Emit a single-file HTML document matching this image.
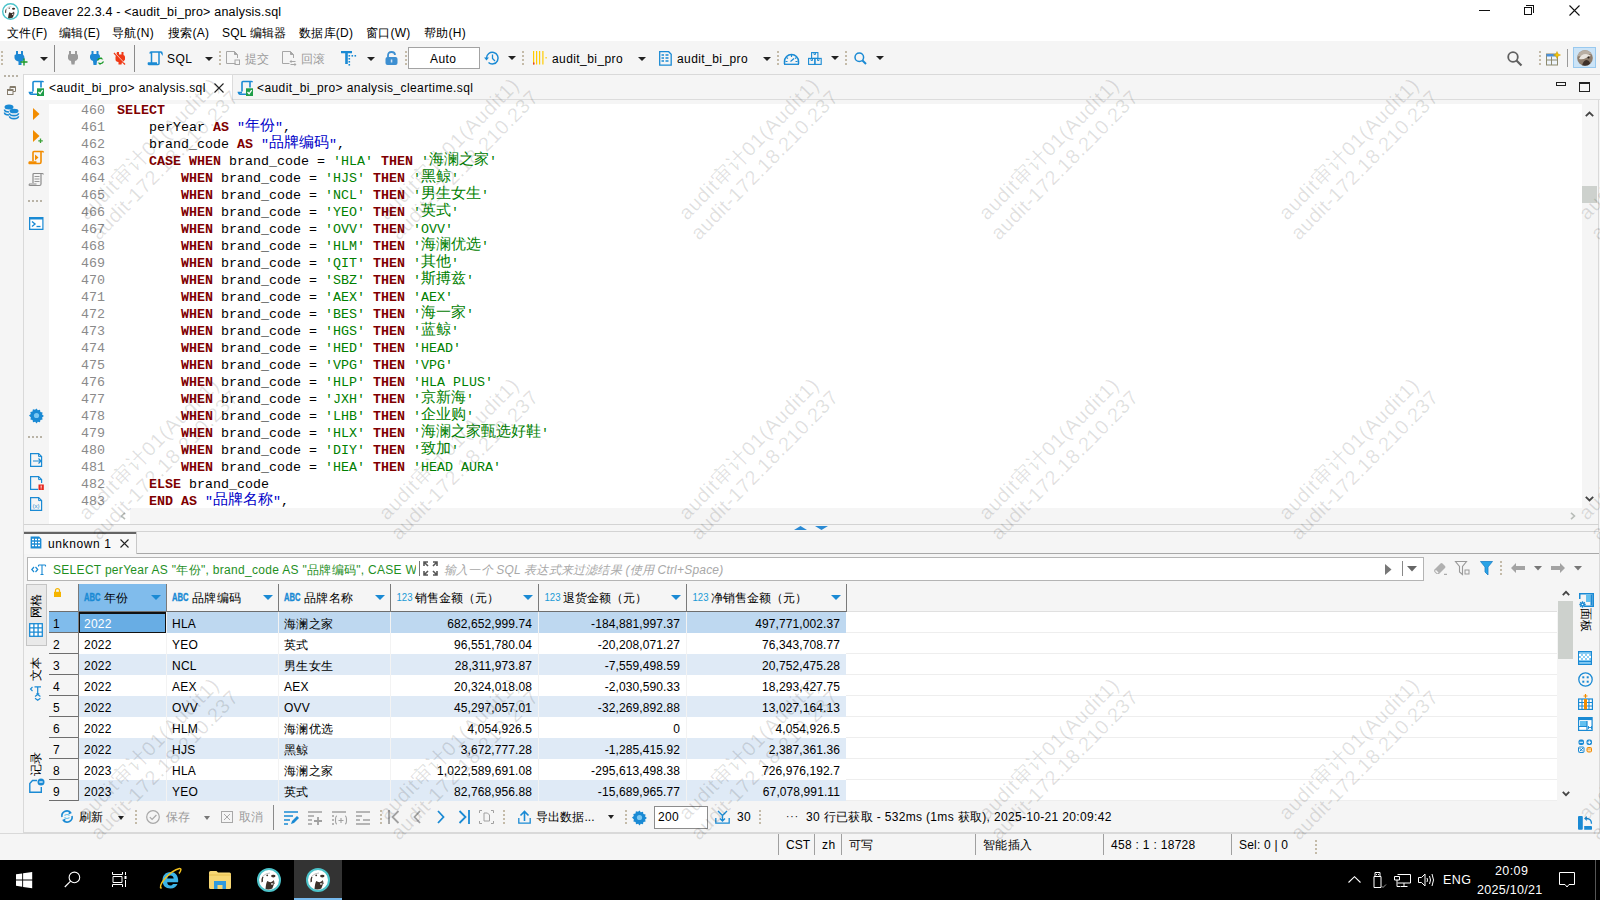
<!DOCTYPE html>
<html><head><meta charset="utf-8">
<style>
*{box-sizing:border-box;margin:0;padding:0}
html,body{width:1600px;height:900px;overflow:hidden;background:#f5f5f5;font-family:"Liberation Sans",sans-serif;font-size:12px;color:#000}
.a{position:absolute}
.t{position:absolute;white-space:nowrap;line-height:14px;letter-spacing:0.25px}
svg{position:absolute;overflow:visible}
.grip{position:absolute;width:2px;height:15px;background:repeating-linear-gradient(to bottom,#c4bba9 0,#c4bba9 2px,transparent 2px,transparent 4px)}
.hgrip{position:absolute;height:2px;width:15px;background:repeating-linear-gradient(to right,#b9b3a6 0,#b9b3a6 2px,transparent 2px,transparent 4px)}
.dd{position:absolute;width:0;height:0;border-left:4px solid transparent;border-right:4px solid transparent;border-top:4px solid #222}
.ddg{position:absolute;width:0;height:0;border-left:4px solid transparent;border-right:4px solid transparent;border-top:4px solid #777}
.vs{position:absolute;width:1px;background:#8a8a8a}
.code{position:absolute;left:0;font-family:"Liberation Mono",monospace;font-size:13.333px;line-height:17px;white-space:pre;color:#000}
.ln{position:absolute;font-family:"Liberation Mono",monospace;font-size:13.333px;line-height:17px;white-space:pre;color:#8a8a8a;left:80px;width:25px;text-align:right}
.k{color:#7f0000;font-weight:bold}
.s{color:#008000}
.q{color:#0000c8}
.cj{font-size:15px;line-height:1px;position:relative;top:-1.5px}
.row{position:absolute;left:49px;height:21px;width:1508px}
.cell{position:absolute;top:0;height:21px;line-height:21px;white-space:nowrap;padding:0 7px;letter-spacing:0.2px}
.num{text-align:right}
.hd{position:absolute;top:0;height:28px;line-height:28px;white-space:nowrap}
.wmt{font-family:"Liberation Sans",sans-serif;font-size:20px;fill:rgba(0,0,0,0.12)}
.wm{position:absolute;transform-origin:0 0;transform:rotate(-44.5deg);white-space:nowrap;font-size:16px;color:rgba(120,120,120,0.18);line-height:20px}
</style></head><body>

<!-- ============ TITLE BAR + MENU ============ -->
<div class="a" style="left:0;top:0;width:1600px;height:41px;background:#fff"></div>
<svg style="left:2px;top:3px" width="17" height="17" viewBox="0 0 24 24"><circle cx="12" cy="12" r="11" fill="#fff" stroke="#4cc3ca" stroke-width="2"/>
  <path d="M5.5 8.5q-1.5 2-1 6l1.5-1q-0.5-3 0.5-4.5Z" fill="#3b3029"/>
  <path d="M6 8q3-3 7-3" stroke="#9a9a9a" stroke-width="0.6" fill="none"/>
  <circle cx="10.2" cy="7.3" r="0.9" fill="#3b3029"/>
  <ellipse cx="16.3" cy="8.1" rx="2.2" ry="1.3" fill="#3b3029"/>
  <path d="M8.5 21q0.5-6 1.8-8q2 1.5 4 1l2.5-1.5q0.5 4-1.5 8Q12 22 8.5 21Z" fill="#3b3029"/>
  <rect x="14.2" y="15.2" width="1.6" height="1.5" fill="#fff"/>
  <path d="M16.5 12.5l0.8 3.5" stroke="#3b3029" stroke-width="0.8"/></svg>
<div class="t" style="left:23px;top:5px;font-size:12.5px;letter-spacing:0.2px">DBeaver 22.3.4 - &lt;audit_bi_pro&gt; analysis.sql</div>
<div class="a" style="left:1479px;top:10px;width:11px;height:1px;background:#111"></div>
<div class="a" style="left:1524px;top:7px;width:8px;height:8px;border:1px solid #111"></div>
<div class="a" style="left:1526px;top:5px;width:8px;height:8px;border-top:1px solid #111;border-right:1px solid #111"></div>
<svg style="left:1569px;top:5px" width="11" height="11" viewBox="0 0 11 11"><path d="M0.5 0.5L10.5 10.5M10.5 0.5L0.5 10.5" stroke="#111" stroke-width="1.1"/></svg>

<div class="t" style="left:7px;top:26px">文件(F)</div>
<div class="t" style="left:59px;top:26px">编辑(E)</div>
<div class="t" style="left:112px;top:26px">导航(N)</div>
<div class="t" style="left:168px;top:26px">搜索(A)</div>
<div class="t" style="left:222px;top:26px">SQL 编辑器</div>
<div class="t" style="left:299px;top:26px">数据库(D)</div>
<div class="t" style="left:366px;top:26px">窗口(W)</div>
<div class="t" style="left:424px;top:26px">帮助(H)</div>

<!-- ============ TOOLBAR ============ -->
<div class="a" style="left:0;top:41px;width:1600px;height:34px;background:#f5f5f5;border-bottom:1px solid #d9d9d9"></div>

<div class="grip" style="left:1px;top:51px"></div>
<svg style="left:14px;top:51px" width="15" height="15" viewBox="0 0 15 15">
  <path d="M2 0h2v3h3V0h2v3.5q1.5 1 1.5 3.5v1.5q-1.5 1.5-3 2L7.5 14h-3L4.5 10.5Q1 9.5 0.5 7V4.5Q0.5 3.5 2 3.5Z" fill="#1e88d4"/>
  <path d="M10 7.5v7M6.5 11h7" stroke="#1a9a2a" stroke-width="1.4"/>
</svg>
<div class="dd" style="left:40px;top:57px"></div>
<div class="vs" style="left:54px;top:45px;height:27px"></div>
<svg style="left:68px;top:51px" width="10" height="14" viewBox="0 0 10 14">
  <path d="M1 0h2v3h4V0h2v3q1 0.5 1 2v2.5q-1 2-3 2.5L6.5 13.5h-3L3 10Q0.5 9.5 0 7.5V5q0-1.5 1-2Z" fill="#9a9a9a"/>
</svg>
<svg style="left:90px;top:51px" width="15" height="15" viewBox="0 0 15 15">
  <path d="M1.5 0h2v3h3V0h2v3q1.5 0.5 1.5 2.5v1L7 10 6.5 14h-3L3 10Q0.5 9.5 0 7V5q0-1.5 1.5-2Z" fill="#1e88d4"/>
  <path d="M7.5 9.5q1-2.5 4-2l-1-1M13.5 10.5q-1 2.5-4 2l1 1" stroke="#1a9a2a" stroke-width="1.3" fill="none"/>
</svg>
<svg style="left:114px;top:52px" width="12" height="13" viewBox="0 0 12 13">
  <path d="M3 0h2v2.5h2.5V0h2v3q1.5 0.5 1.5 2v2.5q-1 2-3 2.5L7.5 12.5h-3L4.5 10Q1.5 9.5 1.5 7.5V5Z" fill="#f03a17"/>
  <path d="M0 1L11 12.5" stroke="#f03a17" stroke-width="1.3"/>
  <path d="M1.5 1.5L10.5 11" stroke="#f5f5f5" stroke-width="0.7"/>
</svg>
<div class="vs" style="left:134px;top:45px;height:27px"></div>
<svg style="left:148px;top:51px" width="14" height="14" viewBox="0 0 14 14">
  <path d="M3.5 11.5V1h9.5M3.5 1q-1.5 0-1.5 1.5M13 1q1 0 1 1.5L13 1M11 1v11.5q0 1-1 1H1q-1 0-0.5-1.5h8.5" stroke="#1a8ad4" stroke-width="1.5" fill="none"/>
</svg>
<div class="t" style="left:167px;top:52px;letter-spacing:0.42px">SQL</div>
<div class="dd" style="left:205px;top:57px"></div>
<div class="grip" style="left:219px;top:51px"></div>
<svg style="left:226px;top:51px" width="14" height="15" viewBox="0 0 14 15">
  <path d="M9.5 12.5H0.5V0.5h8l3 3V7" stroke="#a6a6a6" stroke-width="1" fill="none"/>
  <path d="M8.5 0.5v3h3" stroke="#a6a6a6" stroke-width="1" fill="#a6a6a6"/>
  <rect x="9" y="9" width="4.5" height="4.5" stroke="#a6a6a6" fill="none"/>
</svg>
<div class="t" style="left:245px;top:52px;letter-spacing:0.42px;color:#9c9c9c">提交</div>
<svg style="left:282px;top:51px" width="14" height="15" viewBox="0 0 14 15">
  <path d="M7.5 12.5H0.5V0.5h8l3 3V7" stroke="#a6a6a6" stroke-width="1" fill="none"/>
  <path d="M8.5 0.5v3h3" stroke="#a6a6a6" stroke-width="1" fill="#a6a6a6"/>
  <path d="M8.5 10.5h5M8.5 13.5h5" stroke="#a6a6a6" stroke-width="1.1" fill="none"/><path d="M7.5 10.5l2-1.8v3.6Z M14.5 13.5l-2-1.8v3.6Z" fill="#a6a6a6"/>
</svg>
<div class="t" style="left:301px;top:52px;letter-spacing:0.42px;color:#9c9c9c">回滚</div>
<svg style="left:341px;top:51px" width="16" height="15" viewBox="0 0 16 15">
  <path d="M0 0h11v2.2H6.8V13H4.2V2.2H0Z" fill="#1a8ad4"/>
  <rect x="7.5" y="4" width="1.6" height="1.6" fill="#1a8ad4"/><rect x="10.5" y="4" width="1.6" height="1.6" fill="#1a8ad4"/><rect x="13.5" y="4" width="1.6" height="1.6" fill="#1a8ad4"/>
  <rect x="7.5" y="7" width="1.6" height="1.6" fill="#1a8ad4"/><rect x="7.5" y="10" width="1.6" height="1.6" fill="#1a8ad4"/><rect x="7.5" y="13" width="1.6" height="1.6" fill="#1a8ad4"/>
</svg>
<div class="dd" style="left:367px;top:57px"></div>
<svg style="left:385px;top:51px" width="13" height="14" viewBox="0 0 13 14">
  <path d="M3 6V4.5Q3 1 6.5 1Q10 1 10 4" stroke="#3d8fd1" stroke-width="1.8" fill="none"/>
  <rect x="0.5" y="6" width="12" height="8" rx="2" fill="#3d8fd1"/>
  <rect x="5.8" y="8.5" width="1.5" height="3" fill="#cfe3f5"/>
</svg>
<div class="grip" style="left:405px;top:51px"></div>
<div class="a" style="left:408px;top:47px;width:72px;height:22px;background:#fff;border:1px solid #a3a3a3"></div>
<div class="t" style="left:430px;top:52px;letter-spacing:0.42px">Auto</div>
<svg style="left:484px;top:51px" width="16" height="14" viewBox="0 0 16 14">
  <path d="M2.5 7A5.8 5.8 0 1 1 4.5 11.5" stroke="#1a8ad4" stroke-width="1.5" fill="none"/>
  <path d="M0 6.5L2.5 9.5 5 6.5Z" fill="#1a8ad4"/>
  <path d="M8.5 3.5V7.5L11 10" stroke="#1a8ad4" stroke-width="1.3" fill="none"/>
</svg>
<div class="dd" style="left:508px;top:56px"></div>
<div class="grip" style="left:522px;top:51px"></div>
<svg style="left:533px;top:51px" width="15" height="14" viewBox="0 0 15 14">
  <rect x="0" y="0" width="1.2" height="13.5" fill="#ffcc00"/><rect x="3" y="0" width="1.2" height="13.5" fill="#ffcc00"/>
  <rect x="6" y="0" width="1.2" height="13.5" fill="#ffcc00"/><rect x="9.3" y="0" width="1.2" height="13.5" fill="#ffcc00"/>
  <rect x="12.5" y="6" width="1.2" height="1.5" fill="#ffcc00"/><rect x="0" y="11.5" width="1.5" height="2" fill="#e63b2e"/>
</svg>
<div class="t" style="left:552px;top:52px;letter-spacing:0.42px">audit_bi_pro</div>
<div class="dd" style="left:638px;top:57px"></div>
<svg style="left:659px;top:51px" width="13" height="15" viewBox="0 0 13 15">
  <path d="M0.7 0.7h9l2.5 2.5v11H0.7Z" stroke="#1a8ad4" stroke-width="1.3" fill="none"/>
  <path d="M2.5 4h2.5M6.5 4h3M2.5 7h2.5M6.5 7h3M2.5 10h2.5M6.5 10h3" stroke="#1a8ad4" stroke-width="1.3"/>
</svg>
<div class="t" style="left:677px;top:52px;letter-spacing:0.42px">audit_bi_pro</div>
<div class="dd" style="left:763px;top:57px"></div>
<div class="grip" style="left:777px;top:51px"></div>
<svg style="left:783px;top:52px" width="17" height="13" viewBox="0 0 17 13">
  <path d="M1.5 12V9.5A7 7 0 0 1 15.5 9.5V12" stroke="#1a8ad4" stroke-width="1.5" fill="none"/>
  <path d="M1 12.3h15" stroke="#1a8ad4" stroke-width="1.3"/>
  <path d="M8.5 3v2M3.5 5.5l1.5 1M13.5 5.5l-1.5 1M2.5 9.5h2M12.5 9.5h2M7.5 9.5L11 6.5" stroke="#1a8ad4" stroke-width="1.2"/>
</svg>
<svg style="left:808px;top:52px" width="14" height="13" viewBox="0 0 14 13">
  <rect x="3.6" y="0.6" width="6.3" height="5.8" stroke="#1a8ad4" stroke-width="1.1" fill="none"/>
  <rect x="0.6" y="6.4" width="6.3" height="6" stroke="#1a8ad4" stroke-width="1.1" fill="none"/>
  <rect x="6.9" y="6.4" width="6.3" height="6" stroke="#1a8ad4" stroke-width="1.1" fill="none"/>
  <path d="M6 0.5v2h1.5v-2M3 6.5v2h1.5v-2M9.5 6.5v2H11v-2" stroke="#1a8ad4" stroke-width="0.9" fill="none"/>
</svg>
<div class="dd" style="left:831px;top:56px"></div>
<div class="grip" style="left:845px;top:51px"></div>
<svg style="left:854px;top:52px" width="13" height="13" viewBox="0 0 13 13">
  <circle cx="5.3" cy="5.3" r="4.3" stroke="#1a8ad4" stroke-width="1.5" fill="none"/>
  <path d="M8.5 8.5L12 12" stroke="#1a8ad4" stroke-width="2"/>
</svg>
<div class="dd" style="left:876px;top:56px"></div>

<svg style="left:1507px;top:51px" width="16" height="15" viewBox="0 0 16 15">
  <circle cx="6" cy="6" r="4.8" stroke="#606060" stroke-width="1.8" fill="none"/>
  <path d="M9.5 9.5L14.5 14.5" stroke="#606060" stroke-width="2.2"/>
</svg>
<div class="grip" style="left:1539px;top:51px"></div>
<svg style="left:1546px;top:51px" width="15" height="15" viewBox="0 0 15 15">
  <rect x="0.5" y="3" width="11" height="11" stroke="#8d8a6e" stroke-width="1" fill="#eef4fb"/>
  <rect x="0.5" y="3" width="11" height="2.5" fill="#4a90d9"/>
  <path d="M0.5 9h11M5.5 5.5v8.5" stroke="#8d8a6e" stroke-width="1"/>
  <path d="M11 0.5l1 2.5 2.5 1-2.5 1-1 2.5-1-2.5-2.5-1 2.5-1Z" fill="#f5c400" stroke="#c99a00" stroke-width="0.5"/>
</svg>
<div class="vs" style="left:1567px;top:49px;height:18px;background:#9a9a9a"></div>
<div class="a" style="left:1573px;top:47px;width:23px;height:21px;background:#cce4f7;border:1px solid #99c9ef"></div>
<svg style="left:1577px;top:50px" width="16" height="16" viewBox="0 0 16 16">
  <defs><clipPath id="avc"><circle cx="8" cy="8" r="7.8"/></clipPath></defs>
  <g clip-path="url(#avc)">
  <rect x="0" y="0" width="16" height="16" fill="#8c7b6b"/>
  <path d="M0 0h16v5q-4-2-8 0-4 2-8 1Z" fill="#b8aea3"/>
  <path d="M2 9q2-5 7-5 3 0 5 2-3 0-5 2-3 2-7 1Z" fill="#e9e4de"/>
  <path d="M5 16q1-5 4-6 3 0 4 3 0 3-1 3Z" fill="#3d3029"/>
  <circle cx="11.5" cy="7.5" r="1" fill="#2a211c"/>
  </g>
</svg>


<!-- ============ EDITOR TAB BAR ============ -->

<div class="a" style="left:0;top:75px;width:1600px;height:25px;background:#f5f5f5"></div>
<div class="a" style="left:232px;top:99px;width:1368px;height:1px;background:#dcdcdc"></div>
<div class="a" style="left:23px;top:74px;width:210px;height:26px;background:#fff;border:1px solid #dcdcdc;border-bottom:none"></div>
<svg style="left:29px;top:81px" width="15" height="15" viewBox="0 0 15 15"><path d="M4 10.5V1.5q0-1 1-1h8.5M13.5 0.5q0.8 0 0.8 0.8M12 0.5v6M4 11.5H0.5q0.3 1.5 1.5 1.8h6" stroke="#1a8ad4" stroke-width="1.6" fill="none"/>
  <rect x="8" y="7.3" width="7" height="7.7" fill="#1f9d48"/><path d="M9.5 11l1.6 1.8 2.6-3.6" stroke="#fff" stroke-width="1.3" fill="none"/></svg>
<div class="t" style="left:49px;top:81px;letter-spacing:0.42px">&lt;audit_bi_pro&gt; analysis.sql</div>
<svg style="left:214px;top:83px" width="10" height="10" viewBox="0 0 10 10"><path d="M0.5 0.5L9.5 9.5M9.5 0.5L0.5 9.5" stroke="#222" stroke-width="1.1"/></svg>
<svg style="left:238px;top:81px" width="15" height="15" viewBox="0 0 15 15"><path d="M4 10.5V1.5q0-1 1-1h8.5M13.5 0.5q0.8 0 0.8 0.8M12 0.5v6M4 11.5H0.5q0.3 1.5 1.5 1.8h6" stroke="#1a8ad4" stroke-width="1.6" fill="none"/>
  <rect x="8" y="7.3" width="7" height="7.7" fill="#1f9d48"/><path d="M9.5 11l1.6 1.8 2.6-3.6" stroke="#fff" stroke-width="1.3" fill="none"/></svg>
<div class="t" style="left:257px;top:81px;letter-spacing:0.42px">&lt;audit_bi_pro&gt; analysis_cleartime.sql</div>
<div class="a" style="left:1556px;top:82px;width:10px;height:4px;border:1.5px solid #222"></div>
<div class="a" style="left:1579px;top:82px;width:11px;height:10px;border:1px solid #222;border-top:2px solid #222"></div>

<!-- left strip -->
<div class="a" style="left:0;top:74px;width:24px;height:759px;background:#f5f5f5;border-right:1px solid #d9d9d9"></div>
<div class="hgrip" style="left:4px;top:75px;width:14px"></div>
<svg style="left:7px;top:86px" width="9" height="9" viewBox="0 0 9 9">
  <rect x="0.5" y="3.5" width="5.5" height="5" stroke="#857c6c" stroke-width="1" fill="none"/>
  <path d="M3 3.5V0.5h5.5v5H6" stroke="#857c6c" stroke-width="1" fill="none"/>
  <path d="M0.5 4.5h5.5M3 1.5h5.5" stroke="#857c6c" stroke-width="1"/>
</svg>
<svg style="left:4px;top:104px" width="15" height="15" viewBox="0 0 15 15">
  <ellipse cx="5" cy="3" rx="4.5" ry="2.5" fill="#1a8ad4"/>
  <path d="M0.5 5.5q0 2.5 4.5 2.5M0.5 8.5q0 2.5 4.5 2.5" stroke="#1a8ad4" stroke-width="1.6" fill="none"/>
  <ellipse cx="10" cy="7" rx="4.5" ry="2.3" fill="#1a8ad4"/>
  <path d="M5.5 9.3q0 2.3 4.5 2.3 4.5 0 4.5-2.3M5.5 12.3q0 2.3 4.5 2.3 4.5 0 4.5-2.3" stroke="#1a8ad4" stroke-width="1.6" fill="none"/>
</svg>


<!-- ============ EDITOR ============ -->

<div class="a" style="left:24px;top:100px;width:1576px;height:424px;background:#f5f5f5"></div>
<div class="a" style="left:49px;top:104px;width:1533px;height:404px;background:#fff;overflow:hidden">
<div class="ln" style="top:-2px;left:31px">460</div><div class="code" style="top:-2px;left:68px"><span class="k">SELECT</span></div>
<div class="ln" style="top:15px;left:31px">461</div><div class="code" style="top:15px;left:68px">    perYear <span class="k">AS</span> <span class="q">"<span class="cj">年份</span>"</span>,</div>
<div class="ln" style="top:32px;left:31px">462</div><div class="code" style="top:32px;left:68px">    brand_code <span class="k">AS</span> <span class="q">"<span class="cj">品牌编码</span>"</span>,</div>
<div class="ln" style="top:49px;left:31px">463</div><div class="code" style="top:49px;left:68px">    <span class="k">CASE WHEN</span> brand_code = <span class="s">'HLA'</span> <span class="k">THEN</span> <span class="s">'<span class="cj">海澜之家</span>'</span></div>
<div class="ln" style="top:66px;left:31px">464</div><div class="code" style="top:66px;left:68px">        <span class="k">WHEN</span> brand_code = <span class="s">'HJS'</span> <span class="k">THEN</span> <span class="s">'<span class="cj">黑鲸</span>'</span></div>
<div class="ln" style="top:83px;left:31px">465</div><div class="code" style="top:83px;left:68px">        <span class="k">WHEN</span> brand_code = <span class="s">'NCL'</span> <span class="k">THEN</span> <span class="s">'<span class="cj">男生女生</span>'</span></div>
<div class="ln" style="top:100px;left:31px">466</div><div class="code" style="top:100px;left:68px">        <span class="k">WHEN</span> brand_code = <span class="s">'YEO'</span> <span class="k">THEN</span> <span class="s">'<span class="cj">英式</span>'</span></div>
<div class="ln" style="top:117px;left:31px">467</div><div class="code" style="top:117px;left:68px">        <span class="k">WHEN</span> brand_code = <span class="s">'OVV'</span> <span class="k">THEN</span> <span class="s">'OVV'</span></div>
<div class="ln" style="top:134px;left:31px">468</div><div class="code" style="top:134px;left:68px">        <span class="k">WHEN</span> brand_code = <span class="s">'HLM'</span> <span class="k">THEN</span> <span class="s">'<span class="cj">海澜优选</span>'</span></div>
<div class="ln" style="top:151px;left:31px">469</div><div class="code" style="top:151px;left:68px">        <span class="k">WHEN</span> brand_code = <span class="s">'QIT'</span> <span class="k">THEN</span> <span class="s">'<span class="cj">其他</span>'</span></div>
<div class="ln" style="top:168px;left:31px">470</div><div class="code" style="top:168px;left:68px">        <span class="k">WHEN</span> brand_code = <span class="s">'SBZ'</span> <span class="k">THEN</span> <span class="s">'<span class="cj">斯搏兹</span>'</span></div>
<div class="ln" style="top:185px;left:31px">471</div><div class="code" style="top:185px;left:68px">        <span class="k">WHEN</span> brand_code = <span class="s">'AEX'</span> <span class="k">THEN</span> <span class="s">'AEX'</span></div>
<div class="ln" style="top:202px;left:31px">472</div><div class="code" style="top:202px;left:68px">        <span class="k">WHEN</span> brand_code = <span class="s">'BES'</span> <span class="k">THEN</span> <span class="s">'<span class="cj">海一家</span>'</span></div>
<div class="ln" style="top:219px;left:31px">473</div><div class="code" style="top:219px;left:68px">        <span class="k">WHEN</span> brand_code = <span class="s">'HGS'</span> <span class="k">THEN</span> <span class="s">'<span class="cj">蓝鲸</span>'</span></div>
<div class="ln" style="top:236px;left:31px">474</div><div class="code" style="top:236px;left:68px">        <span class="k">WHEN</span> brand_code = <span class="s">'HED'</span> <span class="k">THEN</span> <span class="s">'HEAD'</span></div>
<div class="ln" style="top:253px;left:31px">475</div><div class="code" style="top:253px;left:68px">        <span class="k">WHEN</span> brand_code = <span class="s">'VPG'</span> <span class="k">THEN</span> <span class="s">'VPG'</span></div>
<div class="ln" style="top:270px;left:31px">476</div><div class="code" style="top:270px;left:68px">        <span class="k">WHEN</span> brand_code = <span class="s">'HLP'</span> <span class="k">THEN</span> <span class="s">'HLA PLUS'</span></div>
<div class="ln" style="top:287px;left:31px">477</div><div class="code" style="top:287px;left:68px">        <span class="k">WHEN</span> brand_code = <span class="s">'JXH'</span> <span class="k">THEN</span> <span class="s">'<span class="cj">京新海</span>'</span></div>
<div class="ln" style="top:304px;left:31px">478</div><div class="code" style="top:304px;left:68px">        <span class="k">WHEN</span> brand_code = <span class="s">'LHB'</span> <span class="k">THEN</span> <span class="s">'<span class="cj">企业购</span>'</span></div>
<div class="ln" style="top:321px;left:31px">479</div><div class="code" style="top:321px;left:68px">        <span class="k">WHEN</span> brand_code = <span class="s">'HLX'</span> <span class="k">THEN</span> <span class="s">'<span class="cj">海澜之家甄选好鞋</span>'</span></div>
<div class="ln" style="top:338px;left:31px">480</div><div class="code" style="top:338px;left:68px">        <span class="k">WHEN</span> brand_code = <span class="s">'DIY'</span> <span class="k">THEN</span> <span class="s">'<span class="cj">致加</span>'</span></div>
<div class="ln" style="top:355px;left:31px">481</div><div class="code" style="top:355px;left:68px">        <span class="k">WHEN</span> brand_code = <span class="s">'HEA'</span> <span class="k">THEN</span> <span class="s">'HEAD AURA'</span></div>
<div class="ln" style="top:372px;left:31px">482</div><div class="code" style="top:372px;left:68px">    <span class="k">ELSE</span> brand_code</div>
<div class="ln" style="top:389px;left:31px">483</div><div class="code" style="top:389px;left:68px">    <span class="k">END AS</span> <span class="q">"<span class="cj">品牌名称</span>"</span>,</div>
</div>

<!-- ruler icons -->
<svg style="left:33px;top:108px" width="7" height="12" viewBox="0 0 7 12"><path d="M0 0L6.5 6 0 12Z" fill="#f28c00"/></svg>
<svg style="left:33px;top:130px" width="11" height="13" viewBox="0 0 11 13"><path d="M0 0L6.5 6 0 12Z" fill="#f28c00"/><path d="M7.5 8.5v4.5M5.3 10.8h4.5" stroke="#3ea33a" stroke-width="1.3"/></svg>
<svg style="left:29px;top:151px" width="15" height="14" viewBox="0 0 15 14">
  <path d="M4 10V1.5q0-1 1-1h8.5q0.8 0 0.8 1M12 0.5v10.5q0 1.5-1.5 1.5H1q-1.5 0-0.5-1.5h7" stroke="#f28c00" stroke-width="1.6" fill="none"/>
  <path d="M6 3.5L9.5 6.5 6 9.5Z" fill="#f28c00"/>
</svg>
<svg style="left:29px;top:173px" width="15" height="14" viewBox="0 0 15 14">
  <path d="M4 10V1.5q0-1 1-1h8.5q0.8 0 0.8 1M12 0.5v10.5q0 1.5-1.5 1.5H1q-1.5 0-0.5-1.5h7" stroke="#8c8c8c" stroke-width="1.2" fill="none"/>
  <path d="M5.5 3.5h5M5.5 6h5M5.5 8.5h5" stroke="#8c8c8c" stroke-width="0.9"/>
</svg>
<div class="hgrip" style="left:28px;top:200px;width:15px;height:1.5px"></div>
<svg style="left:29px;top:217px" width="15" height="13" viewBox="0 0 15 13">
  <rect x="0" y="0" width="14.5" height="13" fill="#1a8ad4"/><rect x="1.3" y="2.5" width="12" height="9.2" fill="#fff"/>
  <path d="M3 4.5L6 7 3 9.5" stroke="#1a8ad4" stroke-width="1.4" fill="none"/><path d="M7.5 9.5h4" stroke="#1a8ad4" stroke-width="1.3"/>
</svg>
<svg style="left:29px;top:408px" width="15" height="15" viewBox="0 0 15 15">
  <path d="M7.5 0.5l1.3 1.8 2.2-0.6 0.4 2.2 2.2 0.5-0.5 2.2 1.8 1.4-1.8 1.4 0.5 2.2-2.2 0.5-0.4 2.2-2.2-0.6-1.3 1.8-1.3-1.8-2.2 0.6-0.4-2.2-2.2-0.5 0.5-2.2L0 7.5l1.8-1.4-0.5-2.2 2.2-0.5 0.4-2.2 2.2 0.6Z" fill="#1a8ad4"/>
  <circle cx="7.5" cy="7.5" r="2.6" fill="#7cc8f2"/>
</svg>
<div class="hgrip" style="left:28px;top:436px;width:15px;height:1.5px"></div>
<svg style="left:30px;top:453px" width="13" height="14" viewBox="0 0 13 14">
  <path d="M0.6 0.6h8l3 3v9.8H0.6Z" stroke="#1a8ad4" stroke-width="1.2" fill="none"/><path d="M8.6 0.6v3h3" stroke="#1a8ad4" stroke-width="1" fill="none"/>
  <path d="M3 8h8M8.5 5.5L11 8 8.5 10.5" stroke="#1a8ad4" stroke-width="1.2" fill="none"/>
</svg>
<svg style="left:30px;top:476px" width="14" height="14" viewBox="0 0 14 14">
  <path d="M8 13.4H0.6V0.6h8l3 3V7" stroke="#1a8ad4" stroke-width="1.2" fill="none"/><path d="M8.6 0.6v3h3" stroke="#1a8ad4" stroke-width="1" fill="none"/>
  <rect x="8.5" y="8.5" width="5.3" height="5.5" fill="#e8261c"/><path d="M11.15 9.5v2.3M11.15 12.5v0.8" stroke="#fff" stroke-width="1"/>
</svg>
<svg style="left:30px;top:497px" width="13" height="14" viewBox="0 0 13 14">
  <path d="M0.6 0.6h8l3 3v9.8H0.6Z" stroke="#1a8ad4" stroke-width="1.2" fill="none"/><path d="M8.6 0.6v3h3" stroke="#1a8ad4" stroke-width="1" fill="none"/>
  <text x="6" y="10.5" font-size="6" fill="#1a8ad4" text-anchor="middle" font-family="Liberation Sans">(x)</text>
</svg>

<!-- editor scrollbars -->
<svg style="left:1585px;top:111px" width="9" height="6" viewBox="0 0 9 6"><path d="M0.8 5.2L4.5 1.5 8.2 5.2" stroke="#444" stroke-width="1.8" fill="none"/></svg>
<div class="a" style="left:1582px;top:186px;width:15px;height:17px;background:#cdd1cd"></div>
<svg style="left:1585px;top:496px" width="9" height="6" viewBox="0 0 9 6"><path d="M0.8 0.8L4.5 4.5 8.2 0.8" stroke="#444" stroke-width="1.8" fill="none"/></svg>
<div class="a" style="left:49px;top:508px;width:81px;height:16px;background:#fff"></div>
<div class="a" style="left:1598px;top:100px;width:1px;height:432px;background:#d9d9d9"></div>
<svg style="left:120px;top:512px" width="6" height="8" viewBox="0 0 6 8"><path d="M5 0.8L1.5 4 5 7.2" stroke="#b8bcb8" stroke-width="1.6" fill="none"/></svg>
<svg style="left:1570px;top:512px" width="6" height="8" viewBox="0 0 6 8"><path d="M1 0.8L4.5 4 1 7.2" stroke="#b8bcb8" stroke-width="1.6" fill="none"/></svg>
<div class="a" style="left:24px;top:524px;width:1575px;height:1px;background:#d3d3d3"></div>
<div class="a" style="left:24px;top:531px;width:1575px;height:1px;background:#d3d3d3"></div>
<svg style="left:794px;top:526px" width="13" height="4" viewBox="0 0 13 4"><path d="M0 4L6.5 0 13 4Z" fill="#2a8ad4"/></svg>
<svg style="left:815px;top:526px" width="13" height="4" viewBox="0 0 13 4"><path d="M0 0L6.5 4 13 0Z" fill="#2a8ad4"/></svg>


<!-- ============ RESULTS ============ -->

<div class="a" style="left:24px;top:532px;width:1576px;height:301px;background:#f5f5f5;border-right:1px solid #d9d9d9;border-bottom:1px solid #d9d9d9"></div>
<!-- results tab -->
<div class="a" style="left:136px;top:553px;width:1463px;height:1px;background:#a8a8a8"></div>
<div class="a" style="left:24px;top:532px;width:113px;height:22px;background:#f8f8f8;border-right:1px solid #c8c8c8"></div>
<div class="a" style="left:24px;top:532px;width:112px;height:2px;background:#646464"></div>
<svg style="left:30px;top:536px" width="12" height="13" viewBox="0 0 12 13">
  <path d="M0.6 0.6h8.5l2.3 2.3v9.5H0.6Z" fill="#1a8ad4"/>
  <path d="M2 3.5h2M5 3.5h2M8 3.5h2M2 6.5h2M5 6.5h2M8 6.5h2M2 9.5h2M5 9.5h2M8 9.5h2" stroke="#fff" stroke-width="1.6"/>
</svg>
<div class="t" style="left:48px;top:537px;letter-spacing:0.6px">unknown 1</div>
<svg style="left:120px;top:539px" width="9" height="9" viewBox="0 0 9 9"><path d="M0.5 0.5L8.5 8.5M8.5 0.5L0.5 8.5" stroke="#222" stroke-width="1.1"/></svg>

<!-- filter bar -->
<div class="a" style="left:27px;top:557px;width:1397px;height:24px;background:#fff;border:1px solid #b4b4b4"></div>
<svg style="left:31px;top:564px" width="15" height="11" viewBox="0 0 15 11">
  <path d="M3 3L0.8 5.5 3 8M4.5 3l2.2 2.5L4.5 8" stroke="#1a8ad4" stroke-width="1.2" fill="none"/>
  <path d="M7.5 1h7M11 1v9.5M9.5 10.5h3M7.5 1v1.5M14.5 1v1.5" stroke="#1a8ad4" stroke-width="1.1" fill="none"/>
</svg>
<div class="t" style="left:53px;top:563px;color:#1f8f1f;letter-spacing:0.3px;width:363px;overflow:hidden">SELECT perYear AS "年份", brand_code AS "品牌编码", CASE WI</div>
<div class="a" style="left:419px;top:561px;width:1px;height:15px;background:#777"></div>
<svg style="left:423px;top:561px" width="15" height="15" viewBox="0 0 15 15">
  <path d="M1 5V1h4M1 1l4 4M14 5V1h-4M14 1l-4 4M1 10v4h4M1 14l4-4M14 10v4h-4M14 14l-4-4" stroke="#555" stroke-width="1.6" fill="none"/>
</svg>
<div class="t" style="left:444px;top:563px;color:#a8a8a8;font-style:italic;letter-spacing:0.2px">输入一个 SQL 表达式来过滤结果 (使用 Ctrl+Space)</div>
<svg style="left:1385px;top:564px" width="7" height="11" viewBox="0 0 7 11"><path d="M0 0L6.5 5.5 0 11Z" fill="#777"/></svg>
<div class="a" style="left:1402px;top:561px;width:1px;height:15px;background:#888"></div>
<svg style="left:1407px;top:566px" width="10" height="6" viewBox="0 0 10 6"><path d="M0 0L5 5.5 10 0Z" fill="#666"/></svg>
<svg style="left:1433px;top:561px" width="15" height="14" viewBox="0 0 15 14">
  <path d="M1.5 8.5L7.5 2.5q1-1 2 0l2.5 2.5q1 1 0 2L6 13H3.5L1.5 11q-1-1 0-2.5Z" fill="#b0b0b0"/>
  <path d="M2.5 9.5l2.5 2.5" stroke="#f5f5f5" stroke-width="1.5"/><path d="M11 13.3h3" stroke="#999" stroke-width="1"/>
</svg>
<svg style="left:1455px;top:561px" width="15" height="14" viewBox="0 0 15 14">
  <path d="M0.5 0.5h11L7.5 5.5v8L4.5 11V5.5Z" stroke="#999" stroke-width="1.1" fill="none"/>
  <rect x="10" y="9" width="4" height="4" stroke="#999" stroke-width="1" fill="none"/>
</svg>
<svg style="left:1480px;top:561px" width="13" height="14" viewBox="0 0 13 14">
  <path d="M0.5 0.5h12L8 6v8L5 11V6Z" fill="#29a3e6" stroke="#1a7fc8" stroke-width="0.8"/>
</svg>
<div class="grip" style="left:1500px;top:561px;height:14px"></div>
<svg style="left:1511px;top:563px" width="14" height="10" viewBox="0 0 14 10"><path d="M0 5L5 0v3h9v4H5v3Z" fill="#a3a3a3"/></svg>
<svg style="left:1534px;top:566px" width="8" height="5" viewBox="0 0 8 5"><path d="M0 0h8L4 4.5Z" fill="#777"/></svg>
<svg style="left:1551px;top:563px" width="14" height="10" viewBox="0 0 14 10"><path d="M14 5L9 0v3H0v4h9v3Z" fill="#a3a3a3"/></svg>
<svg style="left:1574px;top:566px" width="8" height="5" viewBox="0 0 8 5"><path d="M0 0h8L4 4.5Z" fill="#777"/></svg>

<!-- vertical tabs -->
<div class="a" style="left:26px;top:584px;width:21px;height:62px;background:#e9e9e9;border:1px solid #c4c4c4"></div>
<div class="t" style="left:29px;top:618px;transform:rotate(-90deg);transform-origin:0 0;width:26px">网格</div>
<svg style="left:29px;top:623px" width="14" height="14" viewBox="0 0 14 14">
  <rect x="0.7" y="0.7" width="12.6" height="12.6" stroke="#1a8ad4" stroke-width="1.3" fill="#fff"/>
  <path d="M0.7 4.9h12.6M0.7 9.1h12.6M4.9 0.7v12.6M9.1 0.7v12.6" stroke="#1a8ad4" stroke-width="1.3"/>
</svg>
<div class="t" style="left:29px;top:681px;transform:rotate(-90deg);transform-origin:0 0;width:26px">文本</div>
<svg style="left:30px;top:686px" width="12" height="15" viewBox="0 0 12 15">
  <path d="M2.5 1L0.5 3l2 2" stroke="#1a8ad4" stroke-width="1.1" fill="none"/>
  <path d="M4.5 0.8h6.5M7.7 0.8v7M6.3 7.8h3" stroke="#1a8ad4" stroke-width="1.2" fill="none"/>
  <path d="M5 10.5l2.7-2 2.7 2M5 12.3l2.7 2 2.7-2" stroke="#1a8ad4" stroke-width="1.1" fill="none"/>
</svg>
<div class="t" style="left:29px;top:776px;transform:rotate(-90deg);transform-origin:0 0;width:26px">记录</div>
<svg style="left:29px;top:778px" width="16" height="15" viewBox="0 0 16 15">
  <path d="M8 2.5H3.5L0.8 5.5v8.7h11.5V9" stroke="#1a8ad4" stroke-width="1.4" fill="none"/>
  <circle cx="12" cy="4" r="3.5" fill="#1a8ad4"/><path d="M10.3 4h3.4" stroke="#fff" stroke-width="1.2"/>
</svg>

<!-- grid -->
<div class="a" style="left:49px;top:584px;width:1508px;height:217px;background:#fff"></div>
<div class="a" style="left:49px;top:584px;width:1508px;height:28px;background:#f5f5f5"></div>
<div class="a" style="left:78px;top:584px;width:88px;height:28px;background:#80bcec"></div>
<div class="a" style="left:846px;top:611px;width:711px;height:1px;background:#e0e0e0"></div>
<div class="a" style="left:49px;top:611px;width:797px;height:1px;background:#6e6e6e"></div>
<div class="a" style="left:78px;top:584px;width:1px;height:28px;background:#7a7a7a"></div>
<div class="a" style="left:166px;top:584px;width:1px;height:28px;background:#7a7a7a"></div>
<div class="a" style="left:278px;top:584px;width:1px;height:28px;background:#7a7a7a"></div>
<div class="a" style="left:390px;top:584px;width:1px;height:28px;background:#7a7a7a"></div>
<div class="a" style="left:538px;top:584px;width:1px;height:28px;background:#7a7a7a"></div>
<div class="a" style="left:686px;top:584px;width:1px;height:28px;background:#7a7a7a"></div>
<div class="a" style="left:846px;top:584px;width:1px;height:28px;background:#7a7a7a"></div>
<svg style="left:54px;top:588px" width="7" height="9" viewBox="0 0 7 9"><path d="M1.5 4V2.5Q1.5 0.6 3.5 0.6 5.5 0.6 5.5 2.5V4" stroke="#f5b400" stroke-width="1.2" fill="none"/><rect x="0" y="3.8" width="7" height="5.2" fill="#f5b400"/></svg>
<svg style="left:84px;top:593px" width="17" height="9" viewBox="0 0 17 9"><text x="0" y="8" font-family="Liberation Sans" font-size="10" font-weight="bold" fill="#1a8ad4" stroke="#1a8ad4" stroke-width="0.35" textLength="16.5" lengthAdjust="spacingAndGlyphs">ABC</text></svg>
<div class="t" style="left:104px;top:591px">年份</div>
<svg style="left:151px;top:595px" width="10" height="5" viewBox="0 0 10 5"><path d="M0 0h10L5 5Z" fill="#1a8ad4"/></svg>
<svg style="left:172px;top:593px" width="17" height="9" viewBox="0 0 17 9"><text x="0" y="8" font-family="Liberation Sans" font-size="10" font-weight="bold" fill="#1a8ad4" stroke="#1a8ad4" stroke-width="0.35" textLength="16.5" lengthAdjust="spacingAndGlyphs">ABC</text></svg>
<div class="t" style="left:192px;top:591px">品牌编码</div>
<svg style="left:263px;top:595px" width="10" height="5" viewBox="0 0 10 5"><path d="M0 0h10L5 5Z" fill="#1a8ad4"/></svg>
<svg style="left:284px;top:593px" width="17" height="9" viewBox="0 0 17 9"><text x="0" y="8" font-family="Liberation Sans" font-size="10" font-weight="bold" fill="#1a8ad4" stroke="#1a8ad4" stroke-width="0.35" textLength="16.5" lengthAdjust="spacingAndGlyphs">ABC</text></svg>
<div class="t" style="left:304px;top:591px">品牌名称</div>
<svg style="left:375px;top:595px" width="10" height="5" viewBox="0 0 10 5"><path d="M0 0h10L5 5Z" fill="#1a8ad4"/></svg>
<svg style="left:396px;top:592px" width="17" height="10" viewBox="0 0 17 10"><text x="0.5" y="9" font-family="Liberation Sans" font-size="11.5" fill="#1a9ad6" textLength="16" lengthAdjust="spacingAndGlyphs">123</text></svg>
<div class="t" style="left:415px;top:591px;letter-spacing:0">销售金额（元）</div>
<svg style="left:523px;top:595px" width="10" height="5" viewBox="0 0 10 5"><path d="M0 0h10L5 5Z" fill="#1a8ad4"/></svg>
<svg style="left:544px;top:592px" width="17" height="10" viewBox="0 0 17 10"><text x="0.5" y="9" font-family="Liberation Sans" font-size="11.5" fill="#1a9ad6" textLength="16" lengthAdjust="spacingAndGlyphs">123</text></svg>
<div class="t" style="left:563px;top:591px;letter-spacing:0">退货金额（元）</div>
<svg style="left:671px;top:595px" width="10" height="5" viewBox="0 0 10 5"><path d="M0 0h10L5 5Z" fill="#1a8ad4"/></svg>
<svg style="left:692px;top:592px" width="17" height="10" viewBox="0 0 17 10"><text x="0.5" y="9" font-family="Liberation Sans" font-size="11.5" fill="#1a9ad6" textLength="16" lengthAdjust="spacingAndGlyphs">123</text></svg>
<div class="t" style="left:711px;top:591px;letter-spacing:0">净销售金额（元）</div>
<svg style="left:831px;top:595px" width="10" height="5" viewBox="0 0 10 5"><path d="M0 0h10L5 5Z" fill="#1a8ad4"/></svg>
<div class="a" style="left:49px;top:612px;width:29px;height:21px;background:#80bcec;border-bottom:1px solid #6e6e6e"></div>
<div class="t" style="left:53px;top:617px;line-height:14px">1</div>
<div class="a" style="left:78px;top:612px;width:768px;height:21px;background:#bed8f0"></div>
<div class="a" style="left:846px;top:632px;width:711px;height:1px;background:#eeeeee"></div>
<div class="a" style="left:78px;top:612px;width:89px;height:22px;background:#68ade4;border:2px solid #111"></div>
<div class="t" style="left:84px;top:617px;color:#fff">2022</div>
<div class="t" style="left:172px;top:617px;color:#000">HLA</div>
<div class="t" style="left:284px;top:617px;color:#000">海澜之家</div>
<div class="t" style="left:390px;width:142px;text-align:right;top:617px;letter-spacing:0.1px">682,652,999.74</div>
<div class="t" style="left:538px;width:142px;text-align:right;top:617px;letter-spacing:0.1px">-184,881,997.37</div>
<div class="t" style="left:686px;width:154px;text-align:right;top:617px;letter-spacing:0.1px">497,771,002.37</div>
<div class="a" style="left:49px;top:633px;width:29px;height:21px;background:#f5f5f5;border-bottom:1px solid #6e6e6e"></div>
<div class="t" style="left:53px;top:638px;line-height:14px">2</div>
<div class="a" style="left:78px;top:633px;width:768px;height:21px;background:#ffffff"></div>
<div class="a" style="left:846px;top:653px;width:711px;height:1px;background:#eeeeee"></div>
<div class="t" style="left:84px;top:638px;color:#000">2022</div>
<div class="t" style="left:172px;top:638px;color:#000">YEO</div>
<div class="t" style="left:284px;top:638px;color:#000">英式</div>
<div class="t" style="left:390px;width:142px;text-align:right;top:638px;letter-spacing:0.1px">96,551,780.04</div>
<div class="t" style="left:538px;width:142px;text-align:right;top:638px;letter-spacing:0.1px">-20,208,071.27</div>
<div class="t" style="left:686px;width:154px;text-align:right;top:638px;letter-spacing:0.1px">76,343,708.77</div>
<div class="a" style="left:49px;top:654px;width:29px;height:21px;background:#f5f5f5;border-bottom:1px solid #6e6e6e"></div>
<div class="t" style="left:53px;top:659px;line-height:14px">3</div>
<div class="a" style="left:78px;top:654px;width:768px;height:21px;background:#dfeaf6"></div>
<div class="a" style="left:846px;top:674px;width:711px;height:1px;background:#eeeeee"></div>
<div class="t" style="left:84px;top:659px;color:#000">2022</div>
<div class="t" style="left:172px;top:659px;color:#000">NCL</div>
<div class="t" style="left:284px;top:659px;color:#000">男生女生</div>
<div class="t" style="left:390px;width:142px;text-align:right;top:659px;letter-spacing:0.1px">28,311,973.87</div>
<div class="t" style="left:538px;width:142px;text-align:right;top:659px;letter-spacing:0.1px">-7,559,498.59</div>
<div class="t" style="left:686px;width:154px;text-align:right;top:659px;letter-spacing:0.1px">20,752,475.28</div>
<div class="a" style="left:49px;top:675px;width:29px;height:21px;background:#f5f5f5;border-bottom:1px solid #6e6e6e"></div>
<div class="t" style="left:53px;top:680px;line-height:14px">4</div>
<div class="a" style="left:78px;top:675px;width:768px;height:21px;background:#ffffff"></div>
<div class="a" style="left:846px;top:695px;width:711px;height:1px;background:#eeeeee"></div>
<div class="t" style="left:84px;top:680px;color:#000">2022</div>
<div class="t" style="left:172px;top:680px;color:#000">AEX</div>
<div class="t" style="left:284px;top:680px;color:#000">AEX</div>
<div class="t" style="left:390px;width:142px;text-align:right;top:680px;letter-spacing:0.1px">20,324,018.08</div>
<div class="t" style="left:538px;width:142px;text-align:right;top:680px;letter-spacing:0.1px">-2,030,590.33</div>
<div class="t" style="left:686px;width:154px;text-align:right;top:680px;letter-spacing:0.1px">18,293,427.75</div>
<div class="a" style="left:49px;top:696px;width:29px;height:21px;background:#f5f5f5;border-bottom:1px solid #6e6e6e"></div>
<div class="t" style="left:53px;top:701px;line-height:14px">5</div>
<div class="a" style="left:78px;top:696px;width:768px;height:21px;background:#dfeaf6"></div>
<div class="a" style="left:846px;top:716px;width:711px;height:1px;background:#eeeeee"></div>
<div class="t" style="left:84px;top:701px;color:#000">2022</div>
<div class="t" style="left:172px;top:701px;color:#000">OVV</div>
<div class="t" style="left:284px;top:701px;color:#000">OVV</div>
<div class="t" style="left:390px;width:142px;text-align:right;top:701px;letter-spacing:0.1px">45,297,057.01</div>
<div class="t" style="left:538px;width:142px;text-align:right;top:701px;letter-spacing:0.1px">-32,269,892.88</div>
<div class="t" style="left:686px;width:154px;text-align:right;top:701px;letter-spacing:0.1px">13,027,164.13</div>
<div class="a" style="left:49px;top:717px;width:29px;height:21px;background:#f5f5f5;border-bottom:1px solid #6e6e6e"></div>
<div class="t" style="left:53px;top:722px;line-height:14px">6</div>
<div class="a" style="left:78px;top:717px;width:768px;height:21px;background:#ffffff"></div>
<div class="a" style="left:846px;top:737px;width:711px;height:1px;background:#eeeeee"></div>
<div class="t" style="left:84px;top:722px;color:#000">2022</div>
<div class="t" style="left:172px;top:722px;color:#000">HLM</div>
<div class="t" style="left:284px;top:722px;color:#000">海澜优选</div>
<div class="t" style="left:390px;width:142px;text-align:right;top:722px;letter-spacing:0.1px">4,054,926.5</div>
<div class="t" style="left:538px;width:142px;text-align:right;top:722px;letter-spacing:0.1px">0</div>
<div class="t" style="left:686px;width:154px;text-align:right;top:722px;letter-spacing:0.1px">4,054,926.5</div>
<div class="a" style="left:49px;top:738px;width:29px;height:21px;background:#f5f5f5;border-bottom:1px solid #6e6e6e"></div>
<div class="t" style="left:53px;top:743px;line-height:14px">7</div>
<div class="a" style="left:78px;top:738px;width:768px;height:21px;background:#dfeaf6"></div>
<div class="a" style="left:846px;top:758px;width:711px;height:1px;background:#eeeeee"></div>
<div class="t" style="left:84px;top:743px;color:#000">2022</div>
<div class="t" style="left:172px;top:743px;color:#000">HJS</div>
<div class="t" style="left:284px;top:743px;color:#000">黑鲸</div>
<div class="t" style="left:390px;width:142px;text-align:right;top:743px;letter-spacing:0.1px">3,672,777.28</div>
<div class="t" style="left:538px;width:142px;text-align:right;top:743px;letter-spacing:0.1px">-1,285,415.92</div>
<div class="t" style="left:686px;width:154px;text-align:right;top:743px;letter-spacing:0.1px">2,387,361.36</div>
<div class="a" style="left:49px;top:759px;width:29px;height:21px;background:#f5f5f5;border-bottom:1px solid #6e6e6e"></div>
<div class="t" style="left:53px;top:764px;line-height:14px">8</div>
<div class="a" style="left:78px;top:759px;width:768px;height:21px;background:#ffffff"></div>
<div class="a" style="left:846px;top:779px;width:711px;height:1px;background:#eeeeee"></div>
<div class="t" style="left:84px;top:764px;color:#000">2023</div>
<div class="t" style="left:172px;top:764px;color:#000">HLA</div>
<div class="t" style="left:284px;top:764px;color:#000">海澜之家</div>
<div class="t" style="left:390px;width:142px;text-align:right;top:764px;letter-spacing:0.1px">1,022,589,691.08</div>
<div class="t" style="left:538px;width:142px;text-align:right;top:764px;letter-spacing:0.1px">-295,613,498.38</div>
<div class="t" style="left:686px;width:154px;text-align:right;top:764px;letter-spacing:0.1px">726,976,192.7</div>
<div class="a" style="left:49px;top:780px;width:29px;height:21px;background:#f5f5f5;border-bottom:1px solid #6e6e6e"></div>
<div class="t" style="left:53px;top:785px;line-height:14px">9</div>
<div class="a" style="left:78px;top:780px;width:768px;height:21px;background:#dfeaf6"></div>
<div class="a" style="left:846px;top:800px;width:711px;height:1px;background:#eeeeee"></div>
<div class="t" style="left:84px;top:785px;color:#000">2023</div>
<div class="t" style="left:172px;top:785px;color:#000">YEO</div>
<div class="t" style="left:284px;top:785px;color:#000">英式</div>
<div class="t" style="left:390px;width:142px;text-align:right;top:785px;letter-spacing:0.1px">82,768,956.88</div>
<div class="t" style="left:538px;width:142px;text-align:right;top:785px;letter-spacing:0.1px">-15,689,965.77</div>
<div class="t" style="left:686px;width:154px;text-align:right;top:785px;letter-spacing:0.1px">67,078,991.11</div>
<div class="a" style="left:166px;top:612px;width:1px;height:189px;background:#f3f3f3"></div>
<div class="a" style="left:278px;top:612px;width:1px;height:189px;background:#f3f3f3"></div>
<div class="a" style="left:390px;top:612px;width:1px;height:189px;background:#f3f3f3"></div>
<div class="a" style="left:538px;top:612px;width:1px;height:189px;background:#f3f3f3"></div>
<div class="a" style="left:686px;top:612px;width:1px;height:189px;background:#f3f3f3"></div>
<div class="a" style="left:78px;top:612px;width:1px;height:189px;background:#7a7a7a"></div>

<!-- grid scrollbar -->
<div class="a" style="left:1557px;top:584px;width:16px;height:217px;background:#f5f5f5"></div>
<svg style="left:1562px;top:590px" width="8" height="6" viewBox="0 0 8 6"><path d="M0.8 5.2L4 1.8 7.2 5.2" stroke="#444" stroke-width="1.8" fill="none"/></svg>
<div class="a" style="left:1558px;top:601px;width:15px;height:58px;background:#cdd1cd"></div>
<svg style="left:1562px;top:791px" width="8" height="6" viewBox="0 0 8 6"><path d="M0.8 0.8L4 4.2 7.2 0.8" stroke="#444" stroke-width="1.8" fill="none"/></svg>


<!-- ============ STATUS BAR ============ -->

<!-- right panel icons -->
<svg style="left:1579px;top:593px" width="15" height="15" viewBox="0 0 15 15">
  <path d="M0 0h15v14H5.5v-1.5h8V1.5H1.5V6H0Z" fill="#1a8ad4"/>
  <rect x="7" y="1.5" width="4.5" height="7.5" fill="#63c0ef"/><rect x="11.5" y="1.5" width="2" height="11" fill="#1a8ad4"/>
  <path d="M3.5 8.3v6.4M0.3 11.5h6.4M1.2 9.2l4.6 4.6M5.8 9.2l-4.6 4.6" stroke="#1a8ad4" stroke-width="1.3"/>
  <circle cx="3.5" cy="11.5" r="2" fill="#1a8ad4"/><circle cx="3.5" cy="11.5" r="0.8" fill="#fff"/>
</svg>
<div class="t" style="left:1593px;top:608px;transform:rotate(90deg);transform-origin:0 0;width:26px">面板</div>
<svg style="left:1578px;top:651px" width="14" height="14" viewBox="0 0 14 14">
  <rect x="0.6" y="0.6" width="12.8" height="12.8" stroke="#1a8ad4" stroke-width="1.2" fill="#8fd0f5"/>
  <path d="M1 3h2v2H1ZM5 3h2v2H5ZM9 3h2v2H9ZM3 5h2v2H3ZM7 5h2v2H7ZM11 5h2v2h-2ZM1 7h2v2H1ZM5 7h2v2H5ZM9 7h2v2H9Z" fill="#fff"/>
  <path d="M0.6 10.5h12.8" stroke="#1a8ad4" stroke-width="1.2"/>
</svg>
<svg style="left:1578px;top:672px" width="15" height="15" viewBox="0 0 15 15">
  <circle cx="7.5" cy="7.5" r="6.7" stroke="#1a8ad4" stroke-width="1.3" fill="none"/>
  <rect x="4.3" y="4.3" width="2" height="2" fill="#1a8ad4"/><rect x="8.7" y="4.3" width="2" height="2" fill="#1a8ad4"/>
  <rect x="4.3" y="8.7" width="2" height="2" fill="#1a8ad4"/><rect x="8.7" y="8.7" width="2" height="2" fill="#1a8ad4"/>
</svg>
<svg style="left:1578px;top:694px" width="15" height="16" viewBox="0 0 15 16">
  <rect x="0.6" y="5" width="13.8" height="10.4" stroke="#1a8ad4" stroke-width="1.2" fill="#fff"/>
  <path d="M0.6 8.5h13.8M0.6 12h13.8M4 5v10.4M11 5v10.4" stroke="#1a8ad4" stroke-width="1.1"/>
  <rect x="6" y="5" width="3" height="10.4" fill="#f28c00"/><path d="M7.5 0v4M5.5 2h4" stroke="#f28c00" stroke-width="1.2"/>
</svg>
<svg style="left:1578px;top:717px" width="15" height="14" viewBox="0 0 15 14">
  <rect x="0.6" y="0.6" width="13.5" height="12.8" stroke="#1a8ad4" stroke-width="1.2" fill="#fff"/>
  <rect x="0.6" y="0.6" width="13.5" height="2.5" fill="#1a8ad4"/><rect x="2" y="4" width="7" height="5" fill="#63c0ef"/>
  <path d="M0.6 9.5h8.5M9 4v9.4" stroke="#1a8ad4" stroke-width="1.2"/><path d="M10 10.5h4M10.5 9v3M13.5 9v3" stroke="#1a8ad4" stroke-width="0.9"/>
</svg>
<svg style="left:1578px;top:739px" width="15" height="14" viewBox="0 0 15 14">
  <rect x="0.5" y="0.5" width="5.5" height="5.5" rx="2" fill="#1a8ad4"/><path d="M1.5 3.25h3.5" stroke="#fff"/>
  <rect x="8.5" y="0.5" width="5.5" height="5.5" rx="2" fill="#1a8ad4"/><path d="M9.5 3.25h3.5M11.25 1.5v3.5" stroke="#fff"/>
  <rect x="0.5" y="8" width="5.5" height="5.5" rx="1" fill="none" stroke="#1a8ad4"/><path d="M1.5 9l3.5 3.5M5 9l-3.5 3.5" stroke="#1a8ad4"/>
  <rect x="8.5" y="8" width="5.5" height="5.5" rx="2" fill="#f28c00"/><path d="M9.5 10h3.5M9.5 11.8h3.5" stroke="#fff"/>
</svg>
<svg style="left:1578px;top:816px" width="15" height="14" viewBox="0 0 15 14">
  <rect x="0" y="0" width="4.8" height="13.8" rx="1" fill="#1a8ad4"/>
  <path d="M6.2 10h7.3l0.5 0.5v2.8l-0.5 0.5H6.2Z" fill="#1a8ad4"/>
  <path d="M13.5 7.8Q13.5 2.5 8 2.5" stroke="#1a8ad4" stroke-width="1.3" fill="none"/>
  <path d="M6 2.5L8.8 0v5Z" fill="#1a8ad4"/>
</svg>

<!-- bottom toolbar -->
<svg style="left:60px;top:809px" width="14" height="15" viewBox="0 0 14 15">
  <path d="M2 8A5 5 0 0 1 10.5 3.5M12 7A5 5 0 0 1 3.5 11.5" stroke="#1a8ad4" stroke-width="1.6" fill="none"/>
  <path d="M9 1.5l3 2.5-3.5 1.5Z M5 13.5l-3-2.5 3.5-1.5Z" fill="#1a8ad4"/>
  <path d="M4.5 6.5q2.5-2 5 0M4.5 8.5q2.5 2 5 0" stroke="#63c0ef" stroke-width="1.2" fill="none"/>
</svg>
<div class="t" style="left:79px;top:810px">刷新</div>
<div class="dd" style="left:118px;top:816px;border-width:4px 3.5px 0 3.5px"></div>
<div class="grip" style="left:135px;top:810px;height:14px"></div>
<svg style="left:146px;top:810px" width="14" height="14" viewBox="0 0 14 14"><circle cx="7" cy="7" r="6.3" stroke="#a8a8a8" stroke-width="1.2" fill="none"/><path d="M3.8 7.2l2.3 2.3 4.3-4.5" stroke="#a8a8a8" stroke-width="1.2" fill="none"/></svg>
<div class="t" style="left:166px;top:810px;color:#9c9c9c">保存</div>
<div class="ddg" style="left:204px;top:816px;border-width:4px 3.5px 0 3.5px"></div>
<svg style="left:221px;top:811px" width="12" height="12" viewBox="0 0 12 12"><rect x="0.5" y="0.5" width="11" height="11" stroke="#a8a8a8" fill="none"/><path d="M3 3l6 6M9 3L3 9" stroke="#a8a8a8"/></svg>
<div class="t" style="left:239px;top:810px;color:#9c9c9c">取消</div>
<div class="vs" style="left:273px;top:805px;height:25px"></div>
<svg style="left:284px;top:811px" width="16" height="14" viewBox="0 0 16 14">
  <path d="M0 1h14M0 5h9M0 9h6M0 13h4" stroke="#1a8ad4" stroke-width="1.5"/>
  <path d="M7 13l1-3 5-5 2 2-5 5Z" fill="#1a8ad4"/>
</svg>
<svg style="left:308px;top:811px" width="15" height="14" viewBox="0 0 15 14">
  <path d="M0 1h14M0 5h6M0 9h4M0 13h4" stroke="#a0a0a0" stroke-width="1.5"/><path d="M10 6v8M6 10h8" stroke="#a0a0a0" stroke-width="1.8"/>
</svg>
<svg style="left:332px;top:811px" width="15" height="14" viewBox="0 0 15 14">
  <path d="M0 1h14M0 5h2M0 9h2M0 13h2" stroke="#a0a0a0" stroke-width="1.5"/><path d="M5 5q-1.5 0-1.5 4 0 4 1.5 4M13 5q1.5 0 1.5 4 0 4-1.5 4M9 7v5M6.5 9.5h5" stroke="#a0a0a0" stroke-width="1.1" fill="none"/>
</svg>
<svg style="left:356px;top:811px" width="15" height="14" viewBox="0 0 15 14">
  <path d="M0 1h14M0 5h6M0 9h4M0 13h14M7 9h7" stroke="#a0a0a0" stroke-width="1.5"/>
</svg>
<div class="grip" style="left:380px;top:810px;height:14px"></div>
<svg style="left:388px;top:810px" width="12" height="14" viewBox="0 0 12 14"><path d="M1 0v14" stroke="#a0a0a0" stroke-width="1.8"/><path d="M10.5 1L4.5 7l6 6" stroke="#a0a0a0" stroke-width="1.8" fill="none"/></svg>
<svg style="left:413px;top:810px" width="8" height="14" viewBox="0 0 8 14"><path d="M7 1L1.5 7 7 13" stroke="#a0a0a0" stroke-width="1.8" fill="none"/></svg>
<svg style="left:437px;top:810px" width="8" height="14" viewBox="0 0 8 14"><path d="M1 1l5.5 6L1 13" stroke="#1a8ad4" stroke-width="1.8" fill="none"/></svg>
<svg style="left:458px;top:810px" width="12" height="14" viewBox="0 0 12 14"><path d="M11 0v14" stroke="#1a8ad4" stroke-width="1.8"/><path d="M1.5 1l6 6-6 6" stroke="#1a8ad4" stroke-width="1.8" fill="none"/></svg>
<svg style="left:479px;top:810px" width="15" height="14" viewBox="0 0 15 14">
  <path d="M0.5 3V0.5H3M12 0.5h2.5V3M14.5 11v2.5H12M3 13.5H0.5V11" stroke="#a0a0a0" fill="none"/>
  <path d="M5 3h3.5l2 2v6H5Z" stroke="#a0a0a0" fill="none"/>
</svg>
<div class="grip" style="left:503px;top:810px;height:14px"></div>
<svg style="left:518px;top:810px" width="13" height="14" viewBox="0 0 13 14">
  <path d="M6.5 11V1.5M2.5 5.5l4-4 4 4" stroke="#1a8ad4" stroke-width="1.6" fill="none"/><path d="M0.8 8v5.2h11.4V8" stroke="#1a8ad4" stroke-width="1.3" fill="none"/>
</svg>
<div class="t" style="left:536px;top:810px;letter-spacing:0.1px">导出数据...</div>
<div class="dd" style="left:608px;top:815px;border-width:4px 3.5px 0 3.5px"></div>
<div class="grip" style="left:625px;top:810px;height:14px"></div>
<svg style="left:632px;top:810px" width="15" height="15" viewBox="0 0 15 15">
  <path d="M7.5 0.5l1.3 1.8 2.2-0.6 0.4 2.2 2.2 0.5-0.5 2.2 1.8 1.4-1.8 1.4 0.5 2.2-2.2 0.5-0.4 2.2-2.2-0.6-1.3 1.8-1.3-1.8-2.2 0.6-0.4-2.2-2.2-0.5 0.5-2.2L0 7.5l1.8-1.4-0.5-2.2 2.2-0.5 0.4-2.2 2.2 0.6Z" fill="#1a8ad4"/>
  <circle cx="7.5" cy="7.5" r="2.6" fill="#7cc8f2"/>
</svg>
<div class="a" style="left:654px;top:806px;width:54px;height:23px;background:#fff;border:1px solid #8c8c8c"></div>
<div class="t" style="left:658px;top:810px;letter-spacing:0.3px">200</div>
<svg style="left:715px;top:810px" width="15" height="14" viewBox="0 0 15 14">
  <path d="M3 1l4.5 4.5L12 1M7.5 5.5v5.5M5 8.5l2.5 2.5 2.5-2.5" stroke="#1a8ad4" stroke-width="1.4" fill="none"/><path d="M0.8 8v5.2h13.4V8" stroke="#1a8ad4" stroke-width="1.3" fill="none"/>
</svg>
<div class="t" style="left:737px;top:810px;letter-spacing:0.3px">30</div>
<div class="grip" style="left:759px;top:810px;height:14px"></div>
<div class="t" style="left:786px;top:810px;font-size:10px;letter-spacing:1px">···</div>
<div class="t" style="left:806px;top:810px;letter-spacing:0.33px">30 行已获取 - 532ms (1ms 获取), 2025-10-21 20:09:42</div>

<!-- status bar -->
<div class="a" style="left:0;top:833px;width:1600px;height:27px;background:#f5f5f5;border-top:1px solid #d9d9d9"></div>
<div class="a" style="left:778px;top:834px;width:1px;height:21px;background:#a0a0a0"></div>
<div class="a" style="left:814px;top:834px;width:1px;height:21px;background:#a0a0a0"></div>
<div class="a" style="left:841px;top:834px;width:1px;height:21px;background:#a0a0a0"></div>
<div class="a" style="left:975px;top:834px;width:1px;height:21px;background:#a0a0a0"></div>
<div class="a" style="left:1103px;top:834px;width:1px;height:21px;background:#a0a0a0"></div>
<div class="a" style="left:1231px;top:834px;width:1px;height:21px;background:#a0a0a0"></div>
<div class="t" style="left:786px;top:838px;letter-spacing:0">CST</div>
<div class="t" style="left:822px;top:838px;letter-spacing:0.4px">zh</div>
<div class="t" style="left:849px;top:838px">可写</div>
<div class="t" style="left:983px;top:838px">智能插入</div>
<div class="t" style="left:1111px;top:838px;letter-spacing:0.3px">458 : 1 : 18728</div>
<div class="t" style="left:1239px;top:838px;letter-spacing:0.2px">Sel: 0 | 0</div>
<div class="grip" style="left:1315px;top:840px;height:14px"></div>


<!-- ============ TASKBAR ============ -->

<div class="a" style="left:0;top:860px;width:1600px;height:40px;background:#000"></div>
<svg style="left:16px;top:872px" width="17" height="17" viewBox="0 0 17 17">
  <path d="M0 2.3L6.2 1.4V7.6H0ZM7.1 1.3L16.2 0V7.6H7.1ZM0 8.5H6.2V14.7L0 13.8ZM7.1 8.5H16.2V16.2L7.1 14.9Z" fill="#fff"/>
</svg>
<svg style="left:64px;top:871px" width="17" height="18" viewBox="0 0 17 18">
  <circle cx="10.4" cy="6.4" r="5.3" stroke="#fff" stroke-width="1.1" fill="none"/><path d="M6.6 10.2L0.8 16" stroke="#fff" stroke-width="1.2"/>
</svg>
<svg style="left:112px;top:872px" width="15" height="15" viewBox="0 0 15 15">
  <path d="M0.5 0v2.5h10V0M0.5 15v-2.5h10V15M1 4.5h9v6H1Z" stroke="#fff" stroke-width="1" fill="none"/>
  <path d="M13.5 0v3M13.5 8v7" stroke="#fff" stroke-width="1"/><rect x="12.5" y="4" width="2" height="3" fill="#fff"/>
</svg>
<svg style="left:159px;top:867px" width="24" height="24" viewBox="0 0 24 24">
  <path d="M11.5 5C6.5 5 3.5 8.5 3.5 13.5S6.5 21.5 11.5 21.5c3.5 0 6-1.8 7-4.5h-4.5q-1 1.5-2.5 1.5-3 0-3.3-3.3H19q0.2-0.8 0.2-1.8C19.2 8.5 16 5 11.5 5ZM8.2 11.5q0.4-3 3.3-3 2.8 0 3.2 3Z" fill="#3cb4e8"/>
  <path d="M2.5 21.5q-3-2 3-9.5 8-9 15-10.5 3 0-0.5 5" stroke="#f2c01e" stroke-width="1.5" fill="none"/>
</svg>
<svg style="left:209px;top:871px" width="22" height="18" viewBox="0 0 22 18">
  <path d="M0 1.5Q0 0 1.5 0h6l1.5 1.5h11.5Q22 1.5 22 3v13.5q0 1.5-1.5 1.5h-19Q0 18 0 16.5Z" fill="#f7d774"/>
  <path d="M0 4h22" stroke="#e6bf4f" stroke-width="1"/>
  <path d="M5 18v-8h12v8h-3.5v-4h-5v4Z" fill="#2f9ae0"/>
</svg>
<svg style="left:257px;top:868px" width="24" height="24" viewBox="0 0 24 24"><circle cx="12" cy="12" r="11" fill="#fff" stroke="#4cc3ca" stroke-width="2"/>
  <path d="M5.5 8.5q-1.5 2-1 6l1.5-1q-0.5-3 0.5-4.5Z" fill="#3b3029"/>
  <path d="M6 8q3-3 7-3" stroke="#9a9a9a" stroke-width="0.6" fill="none"/>
  <circle cx="10.2" cy="7.3" r="0.9" fill="#3b3029"/>
  <ellipse cx="16.3" cy="8.1" rx="2.2" ry="1.3" fill="#3b3029"/>
  <path d="M8.5 21q0.5-6 1.8-8q2 1.5 4 1l2.5-1.5q0.5 4-1.5 8Q12 22 8.5 21Z" fill="#3b3029"/>
  <rect x="14.2" y="15.2" width="1.6" height="1.5" fill="#fff"/>
  <path d="M16.5 12.5l0.8 3.5" stroke="#3b3029" stroke-width="0.8"/></svg>
<div class="a" style="left:294px;top:860px;width:48px;height:40px;background:#333"></div>
<div class="a" style="left:294px;top:898px;width:48px;height:2px;background:#76b9ed"></div>
<svg style="left:306px;top:868px" width="24" height="24" viewBox="0 0 24 24"><circle cx="12" cy="12" r="11" fill="#fff" stroke="#4cc3ca" stroke-width="2"/>
  <path d="M5.5 8.5q-1.5 2-1 6l1.5-1q-0.5-3 0.5-4.5Z" fill="#3b3029"/>
  <path d="M6 8q3-3 7-3" stroke="#9a9a9a" stroke-width="0.6" fill="none"/>
  <circle cx="10.2" cy="7.3" r="0.9" fill="#3b3029"/>
  <ellipse cx="16.3" cy="8.1" rx="2.2" ry="1.3" fill="#3b3029"/>
  <path d="M8.5 21q0.5-6 1.8-8q2 1.5 4 1l2.5-1.5q0.5 4-1.5 8Q12 22 8.5 21Z" fill="#3b3029"/>
  <rect x="14.2" y="15.2" width="1.6" height="1.5" fill="#fff"/>
  <path d="M16.5 12.5l0.8 3.5" stroke="#3b3029" stroke-width="0.8"/></svg>
<svg style="left:1348px;top:876px" width="13" height="7" viewBox="0 0 13 7"><path d="M0.5 6.5L6.5 0.7 12.5 6.5" stroke="#fff" stroke-width="1.1" fill="none"/></svg>
<svg style="left:1373px;top:872px" width="13" height="16" viewBox="0 0 13 16">
  <path d="M1 4.5h7v11H1ZM2 0.5h5v4H2Z" stroke="#fff" stroke-width="1" fill="none"/><rect x="3" y="2" width="1" height="1" fill="#fff"/><rect x="5" y="2" width="1" height="1" fill="#fff"/>
  <path d="M8.5 14l1.5 1.5 3-3" stroke="#aaa" stroke-width="0.9" fill="none"/>
</svg>
<svg style="left:1394px;top:874px" width="17" height="13" viewBox="0 0 17 13">
  <path d="M3.5 0.5h13v8.5H3.5M10 9v3M6.5 12.5h7" stroke="#fff" stroke-width="1" fill="none"/>
  <path d="M0.5 2.5h5v3.5h-5ZM3 6v6.5H6" stroke="#fff" stroke-width="1" fill="none"/>
</svg>
<svg style="left:1418px;top:873px" width="17" height="14" viewBox="0 0 17 14">
  <path d="M0.5 4.5h3L7 1v12L3.5 9.5h-3Z" stroke="#fff" stroke-width="1" fill="none"/>
  <path d="M9 5q1 2 0 4M11.5 3q2 4 0 8M14 1q3 6 0 12" stroke="#fff" stroke-width="1" fill="none"/>
</svg>
<div class="t" style="left:1443px;top:873px;color:#fff;font-size:12.5px;letter-spacing:0.5px">ENG</div>
<div class="t" style="left:1495px;top:864px;color:#fff;font-size:12.5px;letter-spacing:0.4px">20:09</div>
<div class="t" style="left:1477px;top:883px;color:#fff;font-size:12.5px;letter-spacing:0.3px">2025/10/21</div>
<svg style="left:1559px;top:872px" width="17" height="16" viewBox="0 0 17 16">
  <path d="M0.5 0.5h15v12H10L8 15 6 12.5H0.5Z" stroke="#fff" stroke-width="1" fill="none"/>
</svg>
<div class="a" style="left:1595px;top:860px;width:1px;height:40px;background:#555"></div>


<!-- ============ WATERMARK ============ -->
<svg style="left:0;top:0;pointer-events:none" width="1600" height="900" viewBox="0 0 1600 900">
<text x="87" y="221" transform="rotate(-45.3 87 221)" class="wmt" textLength="189" lengthAdjust="spacing">audit审计01(Audit1)</text>
<text x="99" y="241" transform="rotate(-45.3 99 241)" class="wmt" textLength="200" lengthAdjust="spacing">audit-172.18.210.237</text>
<text x="387" y="221" transform="rotate(-45.3 387 221)" class="wmt" textLength="189" lengthAdjust="spacing">audit审计01(Audit1)</text>
<text x="399" y="241" transform="rotate(-45.3 399 241)" class="wmt" textLength="200" lengthAdjust="spacing">audit-172.18.210.237</text>
<text x="687" y="221" transform="rotate(-45.3 687 221)" class="wmt" textLength="189" lengthAdjust="spacing">audit审计01(Audit1)</text>
<text x="699" y="241" transform="rotate(-45.3 699 241)" class="wmt" textLength="200" lengthAdjust="spacing">audit-172.18.210.237</text>
<text x="987" y="221" transform="rotate(-45.3 987 221)" class="wmt" textLength="189" lengthAdjust="spacing">audit审计01(Audit1)</text>
<text x="999" y="241" transform="rotate(-45.3 999 241)" class="wmt" textLength="200" lengthAdjust="spacing">audit-172.18.210.237</text>
<text x="1287" y="221" transform="rotate(-45.3 1287 221)" class="wmt" textLength="189" lengthAdjust="spacing">audit审计01(Audit1)</text>
<text x="1299" y="241" transform="rotate(-45.3 1299 241)" class="wmt" textLength="200" lengthAdjust="spacing">audit-172.18.210.237</text>
<text x="1587" y="221" transform="rotate(-45.3 1587 221)" class="wmt" textLength="189" lengthAdjust="spacing">audit审计01(Audit1)</text>
<text x="1599" y="241" transform="rotate(-45.3 1599 241)" class="wmt" textLength="200" lengthAdjust="spacing">audit-172.18.210.237</text>
<text x="87" y="521" transform="rotate(-45.3 87 521)" class="wmt" textLength="189" lengthAdjust="spacing">audit审计01(Audit1)</text>
<text x="99" y="541" transform="rotate(-45.3 99 541)" class="wmt" textLength="200" lengthAdjust="spacing">audit-172.18.210.237</text>
<text x="387" y="521" transform="rotate(-45.3 387 521)" class="wmt" textLength="189" lengthAdjust="spacing">audit审计01(Audit1)</text>
<text x="399" y="541" transform="rotate(-45.3 399 541)" class="wmt" textLength="200" lengthAdjust="spacing">audit-172.18.210.237</text>
<text x="687" y="521" transform="rotate(-45.3 687 521)" class="wmt" textLength="189" lengthAdjust="spacing">audit审计01(Audit1)</text>
<text x="699" y="541" transform="rotate(-45.3 699 541)" class="wmt" textLength="200" lengthAdjust="spacing">audit-172.18.210.237</text>
<text x="987" y="521" transform="rotate(-45.3 987 521)" class="wmt" textLength="189" lengthAdjust="spacing">audit审计01(Audit1)</text>
<text x="999" y="541" transform="rotate(-45.3 999 541)" class="wmt" textLength="200" lengthAdjust="spacing">audit-172.18.210.237</text>
<text x="1287" y="521" transform="rotate(-45.3 1287 521)" class="wmt" textLength="189" lengthAdjust="spacing">audit审计01(Audit1)</text>
<text x="1299" y="541" transform="rotate(-45.3 1299 541)" class="wmt" textLength="200" lengthAdjust="spacing">audit-172.18.210.237</text>
<text x="1587" y="521" transform="rotate(-45.3 1587 521)" class="wmt" textLength="189" lengthAdjust="spacing">audit审计01(Audit1)</text>
<text x="1599" y="541" transform="rotate(-45.3 1599 541)" class="wmt" textLength="200" lengthAdjust="spacing">audit-172.18.210.237</text>
<text x="87" y="821" transform="rotate(-45.3 87 821)" class="wmt" textLength="189" lengthAdjust="spacing">audit审计01(Audit1)</text>
<text x="99" y="841" transform="rotate(-45.3 99 841)" class="wmt" textLength="200" lengthAdjust="spacing">audit-172.18.210.237</text>
<text x="387" y="821" transform="rotate(-45.3 387 821)" class="wmt" textLength="189" lengthAdjust="spacing">audit审计01(Audit1)</text>
<text x="399" y="841" transform="rotate(-45.3 399 841)" class="wmt" textLength="200" lengthAdjust="spacing">audit-172.18.210.237</text>
<text x="687" y="821" transform="rotate(-45.3 687 821)" class="wmt" textLength="189" lengthAdjust="spacing">audit审计01(Audit1)</text>
<text x="699" y="841" transform="rotate(-45.3 699 841)" class="wmt" textLength="200" lengthAdjust="spacing">audit-172.18.210.237</text>
<text x="987" y="821" transform="rotate(-45.3 987 821)" class="wmt" textLength="189" lengthAdjust="spacing">audit审计01(Audit1)</text>
<text x="999" y="841" transform="rotate(-45.3 999 841)" class="wmt" textLength="200" lengthAdjust="spacing">audit-172.18.210.237</text>
<text x="1287" y="821" transform="rotate(-45.3 1287 821)" class="wmt" textLength="189" lengthAdjust="spacing">audit审计01(Audit1)</text>
<text x="1299" y="841" transform="rotate(-45.3 1299 841)" class="wmt" textLength="200" lengthAdjust="spacing">audit-172.18.210.237</text>
<text x="1587" y="821" transform="rotate(-45.3 1587 821)" class="wmt" textLength="189" lengthAdjust="spacing">audit审计01(Audit1)</text>
<text x="1599" y="841" transform="rotate(-45.3 1599 841)" class="wmt" textLength="200" lengthAdjust="spacing">audit-172.18.210.237</text>
</svg>

</body></html>
